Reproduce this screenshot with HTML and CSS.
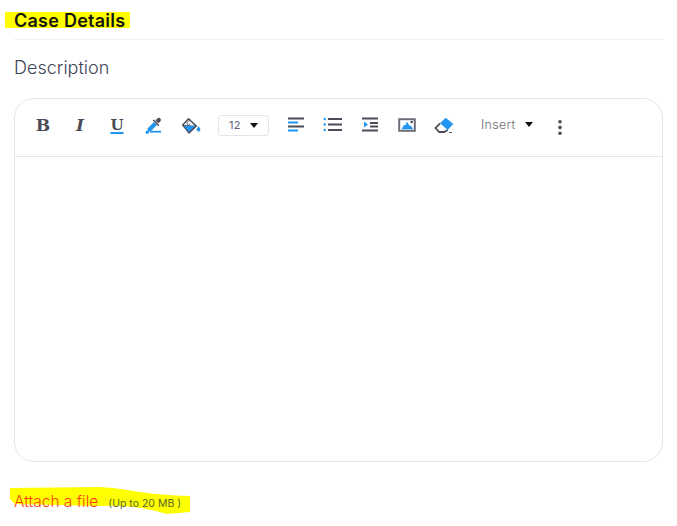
FILE: index.html
```html
<!DOCTYPE html>
<html lang="en">
<head>
<meta charset="utf-8">
<title>Case Details</title>
<link rel="stylesheet" href="styles.css">
</head>
<body>
<main class="page">
  <h1 class="title"><span class="title-mark">Case Details</span></h1>
  <h2 class="label">Description</h2>
  <section class="editor">
    <div class="toolbar">
      <button class="tool glyph glyph-b" type="button">B</button>
      <button class="tool glyph glyph-i" type="button">I</button>
      <button class="tool glyph glyph-u" type="button">U</button>
      <button class="tool" type="button" aria-label="Text color">
        <svg class="icon" viewBox="0 0 24 24"><path d="M8 18.700h11" class="s-blue"/><circle cx="5.300" cy="19.200" r="1.700" class="f-blue"/><path d="M5.500 15.500 12 9l3 3-6.500 6.500-2.500.2z" class="f-blue"/><path d="M10.800 7.600l1-1 5.600 5.600-1 1z" class="f-dark"/><path d="M13.500 7.500l1.800-2c.9-.9 2.200-.9 3 0 .8.800.8 2.100 0 2.900l-2 1.900z" class="f-dark"/></svg>
      </button>
      <button class="tool" type="button" aria-label="Fill color">
        <svg class="icon" viewBox="0 0 24 24"><path d="M2.700 12 9.500 4.700 18.300 13 10 21z" class="f-dark"/><path d="M4.700 12 9.500 6.800 15.800 12.800z" class="f-white"/><path d="M4.500 12.800h11.800L10 19z" class="f-blue"/><path d="M8 10.500c.3-1.800 1.800-3 4-3.500M8 10.500c0 1 .8 1.700 1.700 1.600.8-.1 1.300-.8 1-1.500" class="s-thin"/><path d="M19.500 13.200c.9 1.300 1.900 2.300 1.900 3.400a1.900 1.900 0 0 1-3.800 0c0-1.100 1-2.100 1.900-3.400z" class="f-blue"/></svg>
      </button>
      <button class="size" type="button"><span>12</span><i class="caret"></i></button>
      <button class="tool" type="button" aria-label="Align left">
        <svg class="icon" viewBox="0 0 24 24"><path d="M4 5.500h16M4 13.500h16" class="s-dark"/><path d="M4 9.500h10M4 17.500h10" class="s-blue"/></svg>
      </button>
      <button class="tool" type="button" aria-label="List">
        <svg class="icon" viewBox="0 0 24 24"><path d="M7 6h14M7 11.500h14M7 17h14" class="s-dark"/><circle cx="3.700" cy="6" r="1.200" class="f-blue"/><circle cx="3.700" cy="11.500" r="1.200" class="f-blue"/><circle cx="3.700" cy="17" r="1.200" class="f-blue"/></svg>
      </button>
      <button class="tool" type="button" aria-label="Indent">
        <svg class="icon" viewBox="0 0 24 24"><path d="M4 5.500h16M12 10h8M12 13.500h8M4 17.500h16" class="s-dark"/><path d="M6 8.500v6l4-3z" class="f-blue"/></svg>
      </button>
      <button class="tool" type="button" aria-label="Image">
        <svg class="icon" viewBox="0 0 24 24"><rect x="4.200" y="6.200" width="15.600" height="11.600" class="s-gray"/><path d="M6.700 16.300 9 11.500l1 1.200L12 8.800l3 4.500 1-.7 2 3.700z" class="f-blue"/><circle cx="16.700" cy="9" r="1.300" class="f-dark"/></svg>
      </button>
      <button class="tool" type="button" aria-label="Clear formatting">
        <svg class="icon" viewBox="0 0 24 24"><path d="M13.700 4.700 21.300 11 15.700 17 8 10.300z" class="f-blue"/><path d="M8 10.300 3.500 15l3.700 4h5l3.500-2" class="s-dark"/><path d="M17 19.500h3" class="s-thin"/></svg>
      </button>
      <button class="insert" type="button"><span>Insert</span><i class="caret"></i></button>
      <button class="tool" type="button" aria-label="More">
        <svg class="icon" viewBox="0 0 24 24"><circle cx="12" cy="8.700" r="1.800" class="f-dark"/><circle cx="12" cy="14.400" r="1.800" class="f-dark"/><circle cx="12" cy="20.200" r="1.800" class="f-dark"/></svg>
      </button>
    </div>
    <div class="body"></div>
  </section>
  <div class="attach">
    <svg class="scribble" viewBox="0 0 180 28"><path d="M0 1 90 0 103 1Q118 3 130 5 150 8 180 9L180 25 157 27Q140 22 123 20 105 18 90 19L5 17 0 12Z"/></svg>
    <a class="attach-link">Attach a file</a>
    <small class="attach-note">(Up to 20 MB )</small>
  </div>
</main>
</body>
</html>
```
FILE: styles.css
```css
* { box-sizing: border-box; }
html, body { margin: 0; background: #fff; }
body { font-family: "Inter", "Open Sans", sans-serif; overflow: hidden; }
.page { width: 677px; height: 526px; padding: 12px 14px 0; }
.title {
  margin: 0;
  height: 28px;
  border-bottom: 1px solid #eef0f2;
  width: 649px;
  font-size: 18px;
  font-weight: 600;
  line-height: 18px;
  letter-spacing: .25px;
  color: #141414;
}
.title-mark {
  display: inline-block;
  height: 16px;
  margin-left: -9px;
  padding-left: 9px;
  width: 125px;
  background: #ffff00;
}
.label {
  margin: 16px 0 0;
  font-size: 18px;
  line-height: 24px;
  font-weight: 300;
  color: #3e4556;
}
.editor {
  margin-top: 18px;
  width: 649px;
  height: 364px;
  border: 1px solid #e3e5e8;
  border-radius: 20px;
}
.toolbar {
  display: flex;
  align-items: center;
  height: 58px;
  padding: 0 0 5px 9.500px;
  border-bottom: 1px solid #e3e5e8;
}
.tool {
  width: 37px;
  height: 30px;
  flex: none;
  display: flex;
  align-items: center;
  justify-content: center;
  padding: 0;
  border: 0;
  background: none;
  color: #4a4d57;
}
.glyph { font-family: "DejaVu Serif", serif; font-weight: 700; font-size: 17px; line-height: 1; }
.glyph-i { font-style: italic; }
.glyph-u { text-decoration: underline; text-decoration-color: #2196f3; text-decoration-thickness: 2px; text-underline-offset: 2px; font-size: 15px; }
.icon { width: 24px; height: 24px; display: block; flex: none; }
.s-blue, .s-dark, .s-gray, .s-thin { fill: none; stroke-width: 1.800; }
.s-blue { stroke: #2196f3; }
.s-dark { stroke: #4a4d57; }
.s-gray { stroke: #6d7079; stroke-width: 2; }
.s-thin { stroke: #4a4d57; stroke-width: 1; }
.f-blue { fill: #2196f3; }
.f-dark { fill: #4a4d57; }
.f-white { fill: #fff; }
.size {
  width: 51px;
  height: 21px;
  flex: none;
  margin: 0 8.500px;
  padding: 0 10px;
  display: flex;
  align-items: center;
  justify-content: space-between;
  border: 1px solid #e3e5e8;
  border-radius: 3px;
  background: #fff;
  font: 400 11px "Inter", sans-serif;
  letter-spacing: .4px;
  color: #5d647a;
}
.caret {
  display: block;
  width: 0;
  height: 0;
  border-left: 4.500px solid transparent;
  border-right: 4.500px solid transparent;
  border-top: 5px solid #111;
}
.insert {
  flex: none;
  width: 60.500px;
  margin-left: 18.500px;
  padding: 0 0 2px;
  display: flex;
  align-items: center;
  justify-content: space-between;
  border: 0;
  background: none;
  font: 300 12.500px "Inter", sans-serif;
  letter-spacing: .3px;
  color: #6c6c74;
}
.insert .caret { margin-right: 9px; }
.body { height: 304px; }
.attach {
  position: relative;
  margin-top: 29px;
  display: flex;
  align-items: baseline;
  gap: 10px;
  height: 22px;
  line-height: 22px;
}
.scribble {
  position: absolute;
  left: -4px;
  top: -4px;
  width: 180px;
  height: 28px;
  fill: #ffff00;
}
.attach-link {
  position: relative;
  font-size: 15.500px;
  font-weight: 300;
  color: #ff3b10;
}
.attach-note {
  position: relative;
  font-size: 10.500px;
  color: #56662a;
}
```
